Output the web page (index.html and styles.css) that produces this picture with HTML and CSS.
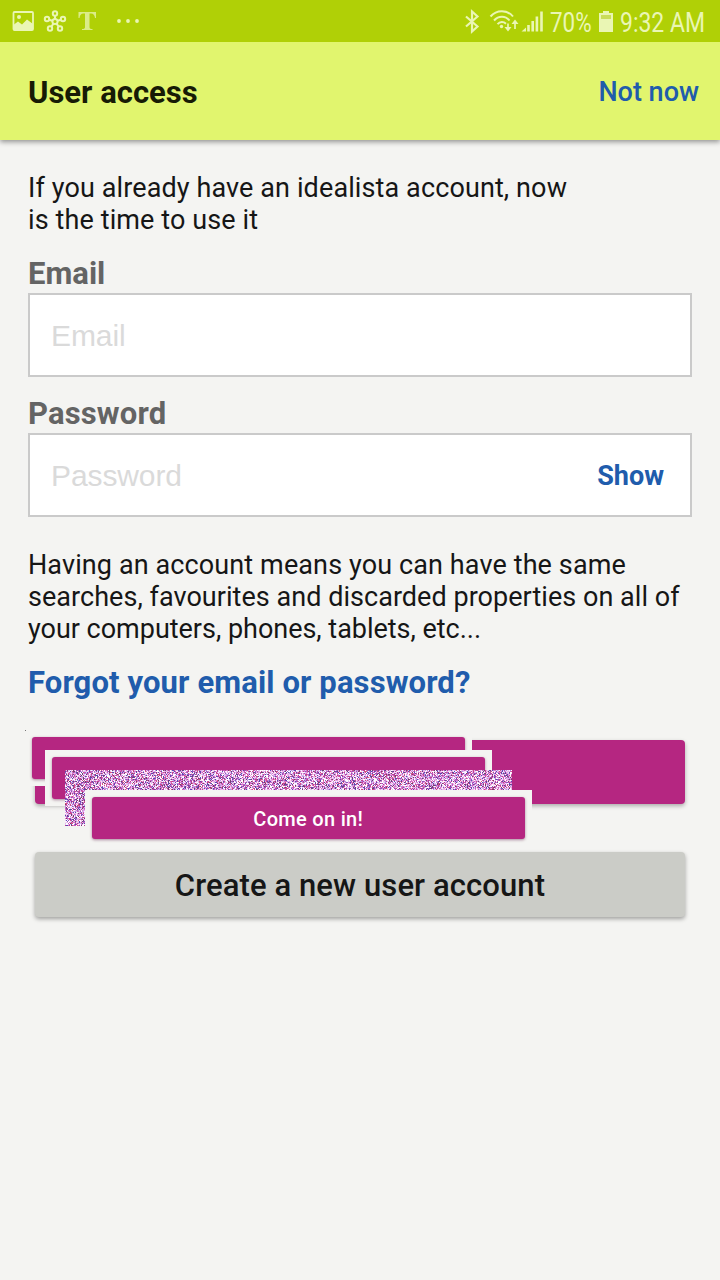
FILE: index.html
```html
<!DOCTYPE html>
<html lang="en">
<head>
<meta charset="utf-8">
<title>User access</title>
<link rel="stylesheet" href="styles.css">
</head>
<body>
<div class="status">
  <svg class="status-left" width="136" height="24" viewBox="0 0 136 24" fill="none" stroke="currentColor">
    <rect x="1.500" y="2" width="19.500" height="18" rx="1" stroke-width="1.800"/>
    <circle cx="7" cy="7" r="2" fill="currentColor" stroke="none"/>
    <path d="M2 19.500v-5l4-3 4 3 5-5 6 4.500v5.500z" fill="currentColor" stroke="none"/>
    <g stroke-width="2">
      <circle cx="43" cy="11.500" r="2.600"/>
      <circle cx="43" cy="3.500" r="2.200"/><circle cx="35" cy="9" r="2.200"/><circle cx="51" cy="9" r="2.200"/><circle cx="38" cy="18.500" r="2.200"/><circle cx="48" cy="18.500" r="2.200"/>
      <path d="M43 5.700v3.200M37 9.700l3.500 1M49 9.700l-3.500 1M41.500 13.700l-2.200 3M44.500 13.700l2.200 3"/>
    </g>
    <path d="M66.500 2h17.500v6h-1c-.4-3-1.500-4.500-4-4.500h-1.500V17c0 1.500.6 2 3 2v1h-10.500v-1c2.400 0 3-.5 3-2V3.500h-1.500c-2.500 0-3.600 1.500-4 4.500h-1z" fill="currentColor" stroke="none" opacity=".75"/>
    <g fill="currentColor" stroke="none"><circle cx="107" cy="11" r="1.900"/><circle cx="116" cy="11" r="1.900"/><circle cx="125" cy="11" r="1.900"/></g>
  </svg>
  <div class="status-right">
    <svg class="radios" width="80" height="26" viewBox="0 0 80 26" fill="none" stroke="currentColor" stroke-width="2.200">
      <path d="M2 7.500l11.500 10-5.500 5V2.500l5.500 5L2 17.500"/>
      <path d="M26.500 7.500c6-7 17-7 22.500 0M30 11.500c4.500-5 11.500-5 15.500 0M33.500 15.200c2.500-2.800 6-2.800 8.500-.5" stroke-width="2"/>
      <circle cx="37.500" cy="17.500" r="1.700" fill="currentColor" stroke="none"/>
      <path d="M44 14.500v5M51 20v-6" stroke-width="1.700"/>
      <path d="M40.500 18h7l-3.500 4.500zM47.500 15h7l-3.500-4.500z" fill="currentColor" stroke="none"/>
      <path d="M57.500 22.500l4.500-4v4z" fill="currentColor" stroke="none"/>
      <path d="M64.500 22.500v-6.500M68.700 22.500v-10.500M72.900 22.500V7.500M77.500 22.500V2.500" stroke-width="2.600"/>
    </svg>
    <span class="battery-text">70%</span>
    <svg class="battery" width="14" height="22" viewBox="0 0 14 22" fill="currentColor">
      <path d="M4 0h6v2h4v19H0V2h4z"/><path d="M2 4h10v4H2z" class="battery-gap"/>
    </svg>
    <span class="clock">9:32 AM</span>
  </div>
</div>
<header class="bar"><h1 class="title">User access</h1><a class="later">Not now</a></header>
<main class="content">
  <p class="copy intro">If you already have an idealista account, now<br>is the time to use it</p>
  <label class="label">Email</label>
  <div class="field"><span class="hint">Email</span></div>
  <label class="label label-password">Password</label>
  <div class="field"><span class="hint">Password</span><a class="show">Show</a></div>
  <p class="copy note"><span class="wide">Having an account means you can have the same</span><br><span class="mid">searches, favourites and discarded properties on all of</span><br><span class="tight">your computers, phones, tablets, etc...</span></p>
  <a class="forgot">Forgot your email or password?</a>
  <div class="actions">
    <div class="primary">
      <div class="layer layer-1"><div class="face"></div></div>
      <div class="layer layer-2"><div class="face"></div></div>
      <canvas class="noise" width="447" height="56"></canvas>
      <div class="layer layer-3"><div class="face">Come on in!</div></div>
    </div>
    <div class="secondary">Create a new user account</div>
  </div>
</main>
<script src="noise.js"></script>
</body>
</html>
```
FILE: styles.css
```css
* { box-sizing: border-box; }
body { margin: 0; width: 720px; height: 1280px; overflow: hidden; background: #f4f4f2; color: #161616; font-family: Roboto, sans-serif; }
.status { position: relative; z-index: 1; height: 42px; background: #b0d006; color: #eaf6b4; display: flex; justify-content: space-between; align-items: center; padding: 1px 14px 0 12px; }
.status-right { display: flex; align-items: center; height: 42px; }
.radios { margin-top: 1px; }
.battery-text, .clock { display: block; font-size: 27px; line-height: 42px; padding-top: 2px; transform-origin: left; white-space: nowrap; }
.battery-text { width: 43px; margin-left: 6px; transform: scaleX(.83); }
.clock { width: 86px; margin-left: 7px; transform: scaleX(.85); }
.battery { margin-left: 6px; }
.battery-gap { fill: #c9dd59; }
.bar { height: 98px; background: #e1f56e; display: flex; align-items: center; justify-content: space-between; padding: 2px 21px 0 28px; box-shadow: 0 2px 5px rgba(0,0,0,.4); }
.title { margin: 2px 0 0; font-size: 31px; line-height: 40px; font-weight: 700; color: #171b05; }
.later { font-size: 27px; font-weight: 500; color: #205cac; }
.content { padding: 32px 28px 0; }
.copy { margin: 0; font-size: 27px; line-height: 32px; white-space: nowrap; }
.intro, .wide { letter-spacing: .11px; }
.mid { letter-spacing: .04px; }
.tight { letter-spacing: -.02px; }
.label { display: block; margin-top: 21px; height: 36px; line-height: 34px; font-size: 31px; font-weight: 700; color: #646464; }
.label-password { margin-top: 20px; letter-spacing: .15px; }
.field { height: 84px; border: 2px solid #cacaca; background: #fff; display: flex; align-items: center; justify-content: space-between; padding: 2px 26px 0 21px; }
.hint { font: 30px "Liberation Sans", Arial, sans-serif; color: #dadada; letter-spacing: -.1px; }
.show { font-size: 27px; font-weight: 700; color: #205cac; }
.note { margin-top: 32px; }
.forgot { display: block; margin-top: 20px; line-height: 36px; font-size: 31px; font-weight: 700; color: #205cac; white-space: nowrap; letter-spacing: .12px; }
.actions { padding: 39px 7px 0; }
.primary { position: relative; height: 64px; border-radius: 4px; background: #b52681; box-shadow: 0 2px 4px rgba(0,0,0,.3); }
.layer { position: absolute; width: 447px; height: 56px; padding: 6.500px; background: #f4f4f2; }
.layer-1 { left: -10px; top: -10px; }
.layer-1::before { content: ""; position: absolute; left: 0; top: 0; width: 1px; height: 1px; background: #777; }
.layer-2 { left: 10px; top: 10px; }
.noise { position: absolute; left: 30px; top: 30px; }
.layer-3 { left: 50px; top: 50px; }
.face { width: 433.500px; height: 42.500px; border-radius: 3px; background: #b52681; box-shadow: 0 1px 3px rgba(80,0,50,.45); color: #fff; font-size: 20px; font-weight: 500; line-height: 44px; letter-spacing: .3px; text-align: center; }
.secondary { margin-top: 48px; height: 65px; border-radius: 4px; background: #cbccc7; box-shadow: 0 2px 4px rgba(0,0,0,.35); text-align: center; font-size: 31px; line-height: 67px; font-weight: 500; letter-spacing: .1px; }
```
FILE: noise.js
```javascript
const canvas = document.querySelector('.noise');
const ctx = canvas.getContext('2d');
const colors = ['#ffffff', '#fdf0ff', '#f8dcf5', '#f2b6e7', '#e79be0', '#d873c8', '#c65bbd', '#bd3e91', '#8f55bc', '#5b48b0', '#b694de', '#d35081', '#ffffff', '#e6c9f4', '#d8b8f0', '#70406f'];
let seed = 73;

function random() {
  seed = (seed + 0x6d2b79f5) | 0;
  let t = Math.imul(seed ^ (seed >>> 15), 1 | seed);
  t = (t + Math.imul(t ^ (t >>> 7), 61 | t)) ^ t;
  return ((t ^ (t >>> 14)) >>> 0) / 4294967296;
}

for (let y = 0; y < 56; y++) {
  for (let x = 0; x < 447; x++) {
    ctx.fillStyle = colors[Math.floor(random() * colors.length)];
    ctx.fillRect(x, y, 1, 1);
  }
}
```
